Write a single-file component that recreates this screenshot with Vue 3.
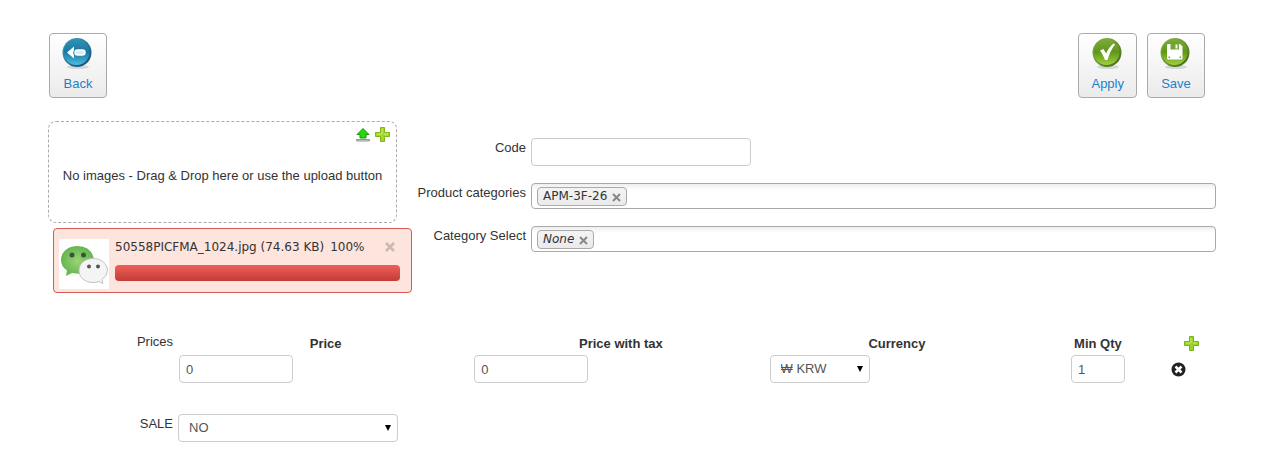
<script setup>
import { ref } from 'vue'

const code = ref('')
const sale = ref('NO')
const row = ref({ price: '0', priceTax: '0', currency: '₩ KRW', qty: '1' })
</script>

<template>
  <main class="page">
    <header class="toolbar">
      <button type="button" class="tool">
        <svg class="orb" viewBox="0 0 32 32" aria-hidden="true">
          <defs>
            <linearGradient id="blue" x1="0" y1="0" x2="0" y2="1">
              <stop offset="0" stop-color="#2f93b8" />
              <stop offset="0.5" stop-color="#1a77a3" />
              <stop offset="1" stop-color="#4cbde0" />
            </linearGradient>
            <linearGradient id="blue-rim" x1="0" y1="0" x2="1" y2="1">
              <stop offset="0" stop-color="#4fa3c2" />
              <stop offset="1" stop-color="#0f4b69" />
            </linearGradient>
          </defs>
          <ellipse cx="16" cy="29" rx="11" ry="2" fill="#d3d7d9" />
          <circle cx="15" cy="14.500" r="14.500" fill="url(#blue-rim)" />
          <circle cx="14.500" cy="14" r="13" fill="url(#blue)" />
          <path d="M5 14.500 12 8.500v3.500q-1.500 2.500 0 5v3.500Z" fill="#fff" />
          <rect x="13" y="12" width="10" height="5" rx="2.500" fill="#d8edf5" stroke="#fff" stroke-width="1.500" />
        </svg>
        <span>Back</span>
      </button>
      <div class="tools">
        <button type="button" class="tool">
          <svg class="orb" viewBox="0 0 32 32" aria-hidden="true">
            <defs>
              <linearGradient id="green" x1="0" y1="0" x2="0" y2="1">
                <stop offset="0" stop-color="#7dab38" />
                <stop offset="0.5" stop-color="#5f961a" />
                <stop offset="1" stop-color="#a0d03f" />
              </linearGradient>
              <linearGradient id="green-rim" x1="0" y1="0" x2="1" y2="1">
                <stop offset="0" stop-color="#94bd55" />
                <stop offset="1" stop-color="#3f6610" />
              </linearGradient>
            </defs>
            <ellipse cx="16" cy="29" rx="11" ry="2" fill="#d3d7d9" />
            <circle cx="15" cy="14.500" r="14.500" fill="url(#green-rim)" />
            <circle cx="14.500" cy="14" r="13" fill="url(#green)" />
            <path d="m8 12.500 3.500-1.500 2.500 4.500Q17 9 21.500 5.500l1.500 1Q18 13 15.500 22H13Q11 16.500 8 12.500Z" fill="#fff" />
          </svg>
          <span>Apply</span>
        </button>
        <button type="button" class="tool">
          <svg class="orb" viewBox="0 0 32 32" aria-hidden="true">
            <ellipse cx="16" cy="29" rx="11" ry="2" fill="#d3d7d9" />
            <circle cx="15" cy="14.500" r="14.500" fill="url(#green-rim)" />
            <circle cx="14.500" cy="14" r="13" fill="url(#green)" />
            <path d="M8 6h12l2.500 2.500V20q0 1.500-1.500 1.500H8.500Q7 21.500 7 20V7q0-1 1-1Z" fill="#fff" />
            <path d="M10.500 6h8.500v5.500h-8.500Z" fill="#75a534" />
            <path d="M15.500 6.500h2v4h-2Z" fill="#fff" />
            <path d="M8.500 18.500H10V20H8.500ZM19.500 18.500H21V20h-1.500Z" fill="#75a534" />
          </svg>
          <span>Save</span>
        </button>
      </div>
    </header>

    <div class="details">
      <section class="images">
        <div class="dropzone">
          <div class="drop-actions">
            <button type="button" class="icon-button" aria-label="Upload">
              <svg width="16" height="16" viewBox="0 0 16 16" aria-hidden="true">
                <path d="M8 1.500 14 7.500h-3V11H5V7.500H2Z" fill="#25d50d" stroke="#159b0b" />
                <path d="M1.500 12.500h13v1.500h-13Z" fill="#d9d9d9" stroke="#969696" />
              </svg>
            </button>
            <button type="button" class="icon-button" aria-label="Add image">
              <svg width="16" height="16" viewBox="0 0 16 16" aria-hidden="true">
                <path d="M5.500 .5h4V5.500h5v4h-5v5h-4v-5h-5v-4h5Z" fill="#a3d825" stroke="#7fb51a" />
                <path d="M7 2v5H2m7 0h4" fill="none" stroke="#caee6b" />
              </svg>
            </button>
          </div>
          <p>No images - Drag &amp; Drop here or use the upload button</p>
        </div>
        <div class="upload">
          <svg class="thumb" viewBox="0 0 50 50" role="img" aria-label="Chat bubbles">
            <defs>
              <radialGradient id="bubble">
                <stop offset="0" stop-color="#9bd377" />
                <stop offset="1" stop-color="#65b64f" />
              </radialGradient>
            </defs>
            <rect width="50" height="50" fill="#fff" />
            <path d="M18.500 7C9 7 2 13 2 21q0 6.500 6 10.500L7 37l6-3q16 3 20.500-6Q35 24 35 20 32 7 18.500 7Z" fill="url(#bubble)" />
            <circle cx="13" cy="16" r="2.500" fill="#39543b" />
            <circle cx="24.500" cy="16" r="2.500" fill="#39543b" />
            <path d="M34 19.500c-8 0-14 5-14 12s6 12 14 12q3 0 6-1l4 2-1-4q5.500-4 5.500-9c0-7-6.500-12-14.500-12Z" fill="#f4f4f4" stroke="#c2c2c2" />
            <circle cx="30" cy="27.500" r="2" fill="#555" />
            <circle cx="39" cy="27.500" r="2" fill="#555" />
          </svg>
          <div class="upload-body">
            <div class="upload-info">
              <span>50558PICFMA_1024.jpg (74.63 KB)</span>
              <span>100%</span>
              <button type="button" class="icon-button dismiss" aria-label="Cancel upload">
                <svg width="10" height="10" viewBox="0 0 10 10" aria-hidden="true">
                  <path d="m1 1 8 8m0-8L1 9" stroke="#cbb8b1" stroke-width="2.500" />
                </svg>
              </button>
            </div>
            <div class="bar" role="progressbar" aria-label="Upload progress" aria-valuenow="100"></div>
          </div>
        </div>
      </section>

      <section class="fields">
        <label for="code">Code</label>
        <input id="code" v-model="code" class="control wide" type="text">
        <label for="categories">Product categories</label>
        <div class="tags">
          <span class="tag">APM-3F-26
            <button type="button" class="icon-button" aria-label="Remove APM-3F-26">
              <svg width="9" height="9" viewBox="0 0 9 9" aria-hidden="true"><path d="m1 1 7 7m0-7L1 8" stroke="#888" stroke-width="2" /></svg>
            </button>
          </span>
          <input id="categories" type="text">
        </div>
        <label for="category">Category Select</label>
        <div class="tags">
          <span class="tag"><em>None</em>
            <button type="button" class="icon-button" aria-label="Remove None">
              <svg width="9" height="9" viewBox="0 0 9 9" aria-hidden="true"><path d="m1 1 7 7m0-7L1 8" stroke="#888" stroke-width="2" /></svg>
            </button>
          </span>
          <input id="category" type="text">
        </div>
      </section>
    </div>

    <section class="form-row prices">
      <span id="prices" class="row-label">Prices</span>
      <table aria-labelledby="prices">
        <colgroup>
          <col class="c-price"><col class="c-price"><col class="c-currency"><col class="c-qty"><col>
        </colgroup>
        <thead>
          <tr>
            <th id="h-price">Price</th>
            <th id="h-tax">Price with tax</th>
            <th id="h-currency">Currency</th>
            <th id="h-qty">Min Qty</th>
            <th>
              <button type="button" class="icon-button" aria-label="Add price">
                <svg width="16" height="16" viewBox="0 0 16 16" aria-hidden="true">
                  <path d="M5.500 .5h4V5.500h5v4h-5v5h-4v-5h-5v-4h5Z" fill="#96d525" stroke="#78b31a" />
                  <path d="M7 2v5H2m7 0h4" fill="none" stroke="#c5ec66" />
                </svg>
              </button>
            </th>
          </tr>
        </thead>
        <tbody>
          <tr>
            <td><input v-model="row.price" class="control amount" type="text" aria-labelledby="h-price"></td>
            <td><input v-model="row.priceTax" class="control amount" type="text" aria-labelledby="h-tax"></td>
            <td>
              <div class="select currency">
                <select v-model="row.currency" class="control" aria-labelledby="h-currency"><option>₩ KRW</option></select>
                <svg width="6" height="6" viewBox="0 0 6 6" aria-hidden="true"><path d="M0 0h6L3 6Z" /></svg>
              </div>
            </td>
            <td class="center"><input v-model="row.qty" class="control qty" type="text" aria-labelledby="h-qty"></td>
            <td>
              <button type="button" class="icon-button" aria-label="Remove price">
                <svg width="16" height="16" viewBox="0 0 16 16" aria-hidden="true">
                  <circle cx="7.500" cy="7.500" r="7" fill="#222" />
                  <path d="m4.500 4.500 6 6m0-6-6 6" stroke="#fff" stroke-width="2.500" />
                </svg>
              </button>
            </td>
          </tr>
        </tbody>
      </table>
    </section>

    <section class="form-row sale">
      <label class="row-label" for="sale">SALE</label>
      <div class="select wide">
        <select id="sale" v-model="sale" class="control"><option>NO</option></select>
        <svg width="6" height="6" viewBox="0 0 6 6" aria-hidden="true"><path d="M0 0h6L3 6Z" /></svg>
      </div>
    </section>
  </main>
</template>

<style>
body {
  background: #fff;
}
</style>

<style scoped>
.page {
  padding: 33px 60px 16px 48px;
  font: 13px/20px "Liberation Sans", Arial, sans-serif;
  color: #333;
}
.page * {
  box-sizing: border-box;
}
button,
input,
select {
  font: inherit;
  color: inherit;
}
.toolbar {
  display: flex;
  justify-content: space-between;
  padding: 0 11px 0 1px;
}
.tools {
  display: flex;
  gap: 10px;
}
.tool {
  display: flex;
  flex-direction: column;
  align-items: center;
  gap: 4px;
  min-width: 58px;
  height: 65px;
  padding: 4px 12px;
  border: 1px solid #aaa;
  border-radius: 4px;
  background: linear-gradient(#fff, #ebebeb);
  color: #1a82c9;
  cursor: pointer;
}
.orb {
  flex: none;
  width: 32px;
  height: 32px;
}
.icon-button {
  display: inline-flex;
  padding: 0;
  border: 0;
  background: none;
  cursor: pointer;
}
.details {
  display: flex;
  margin-top: 23px;
}
.images {
  flex: none;
  width: 364px;
}
.dropzone {
  position: relative;
  display: flex;
  align-items: center;
  justify-content: center;
  width: 349px;
  height: 102px;
  border: 1px dashed #aaa;
  border-radius: 8px;
}
.dropzone p {
  margin: 8px 0 0;
}
.drop-actions {
  position: absolute;
  top: 5px;
  right: 5px;
  display: flex;
  gap: 4px;
}
.upload {
  display: flex;
  gap: 6px;
  margin: 5px 0 0 5px;
  height: 65px;
  padding: 10px 11px 0 5px;
  border: 1px solid #d85a54;
  border-radius: 4px;
  background: #fde4dc;
}
.thumb {
  flex: none;
  width: 50px;
  height: 50px;
}
.upload-body {
  flex: 1;
}
.upload-info {
  display: flex;
  align-items: center;
  gap: 6px;
  height: 16px;
  font: 12px/16px "DejaVu Sans", Verdana, sans-serif;
  white-space: nowrap;
}
.dismiss {
  margin: 0 5px 0 auto;
}
.bar {
  height: 16px;
  margin-top: 10px;
  border-radius: 4px;
  background: linear-gradient(#ee5f5b, #c43c35);
}
.fields {
  flex: 1;
  display: grid;
  grid-template-columns: 114px 1fr;
  grid-auto-rows: min-content;
  column-gap: 5px;
  row-gap: 17px;
  padding-top: 17px;
}
.fields label {
  text-align: right;
  white-space: nowrap;
}
.control {
  height: 28px;
  padding: 0 6px;
  border: 1px solid #ccc;
  border-radius: 4px;
  background: #fff;
  color: #555;
}
.wide {
  width: 220px;
}
.tags {
  display: flex;
  align-items: center;
  height: 26px;
  padding: 0 5px;
  border: 1px solid #aaa;
  border-radius: 4px;
  background: linear-gradient(#eee, #fff 25%);
}
.tags input {
  flex: 1;
  min-width: 0;
  border: 0;
  outline: 0;
  background: none;
}
.tag {
  display: flex;
  align-items: center;
  gap: 5px;
  height: 19px;
  padding: 0 5px;
  border: 1px solid #aaa;
  border-radius: 4px;
  background: linear-gradient(#f4f4f4, #eaeaea);
  font: 12px/16px "DejaVu Sans", Verdana, sans-serif;
}
.tag .icon-button {
  padding-top: 3px;
}
.form-row {
  display: grid;
  grid-template-columns: 125px 1fr;
  column-gap: 5px;
}
.row-label {
  text-align: right;
}
.prices {
  margin-top: 39px;
  padding-right: 2px;
}
table {
  width: 100%;
  table-layout: fixed;
  border-collapse: collapse;
}
.c-price {
  width: 28.5%;
}
.c-currency {
  width: 24.8%;
}
.c-qty {
  width: 14%;
}
th {
  height: 23px;
  padding: 0;
  vertical-align: middle;
}
td {
  padding: 0 1px;
}
th .icon-button,
td .icon-button,
td .control {
  vertical-align: middle;
}
.center {
  text-align: center;
}
.amount {
  width: 114px;
}
.qty {
  width: 54px;
}
.select {
  position: relative;
}
.select select {
  display: block;
  width: 100%;
  padding: 0 10px;
  appearance: none;
}
.select svg {
  position: absolute;
  top: 11px;
  right: 7px;
  pointer-events: none;
}
.currency {
  width: 100px;
}
.sale {
  margin-top: 31px;
}
</style>
